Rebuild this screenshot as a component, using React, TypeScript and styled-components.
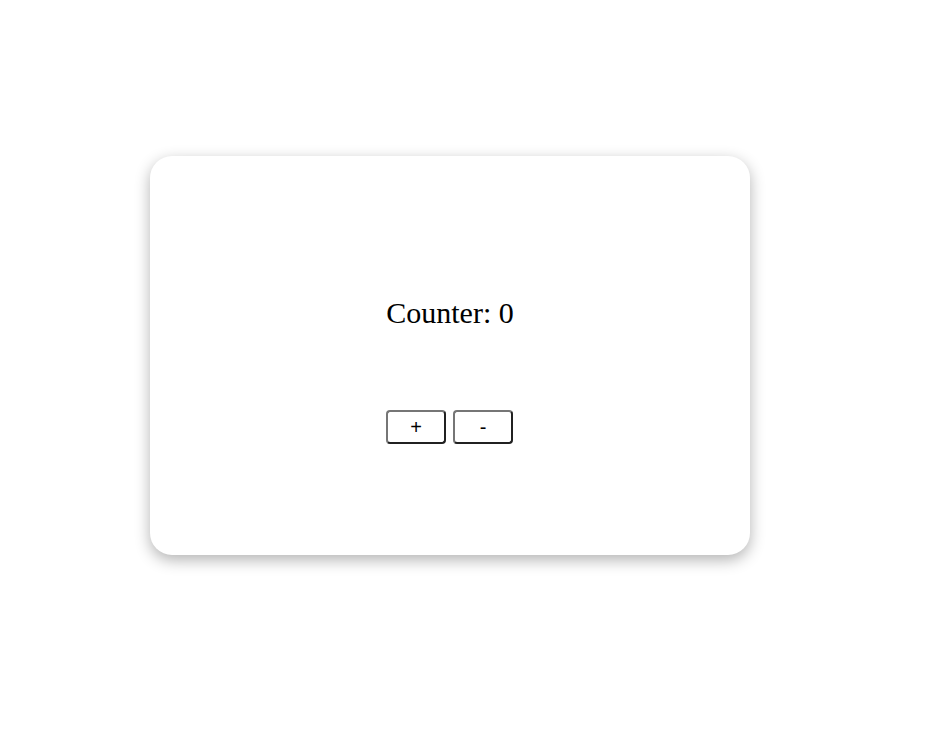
import React, { useState } from "react";
import styled, { createGlobalStyle } from "styled-components";

const GlobalStyle = createGlobalStyle`
  html, body {
    margin: 0;
    padding: 0;
    background: #ffffff;
  }
`;

const Page = styled.div`
  padding: 156px 0 0 150px;
  min-height: 748px;
  box-sizing: border-box;
`;

const Card = styled.div`
  width: 600px;
  height: 399px;
  box-sizing: border-box;
  background: #ffffff;
  border-radius: 22px;
  box-shadow: 0 5px 15px rgba(0, 0, 0, 0.3);
  display: flex;
  flex-direction: column;
  align-items: center;
  padding-top: 140px;
  gap: 80px;
`;

const Title = styled.div`
  font-family: "Liberation Serif", "Times New Roman", serif;
  font-size: 30px;
  line-height: 34px;
  color: #000;
`;

const Buttons = styled.div`
  display: flex;
  gap: 7px;
  margin-right: 1px;
`;

const Btn = styled.button`
  width: 60px;
  height: 34px;
  box-sizing: border-box;
  background: #ffffff;
  border: 2px outset #767676;
  border-radius: 4px;
  font-family: "Liberation Sans", Arial, sans-serif;
  font-size: 20px;
  color: #000;
  padding: 0;
  cursor: pointer;
`;

export default function App() {
  const [count, setCount] = useState(0);
  return (
    <>
      <GlobalStyle />
      <Page>
        <Card>
          <Title>Counter: {count}</Title>
          <Buttons>
            <Btn onClick={() => setCount((c) => c + 1)}>+</Btn>
            <Btn onClick={() => setCount((c) => c - 1)}>-</Btn>
          </Buttons>
        </Card>
      </Page>
    </>
  );
}
